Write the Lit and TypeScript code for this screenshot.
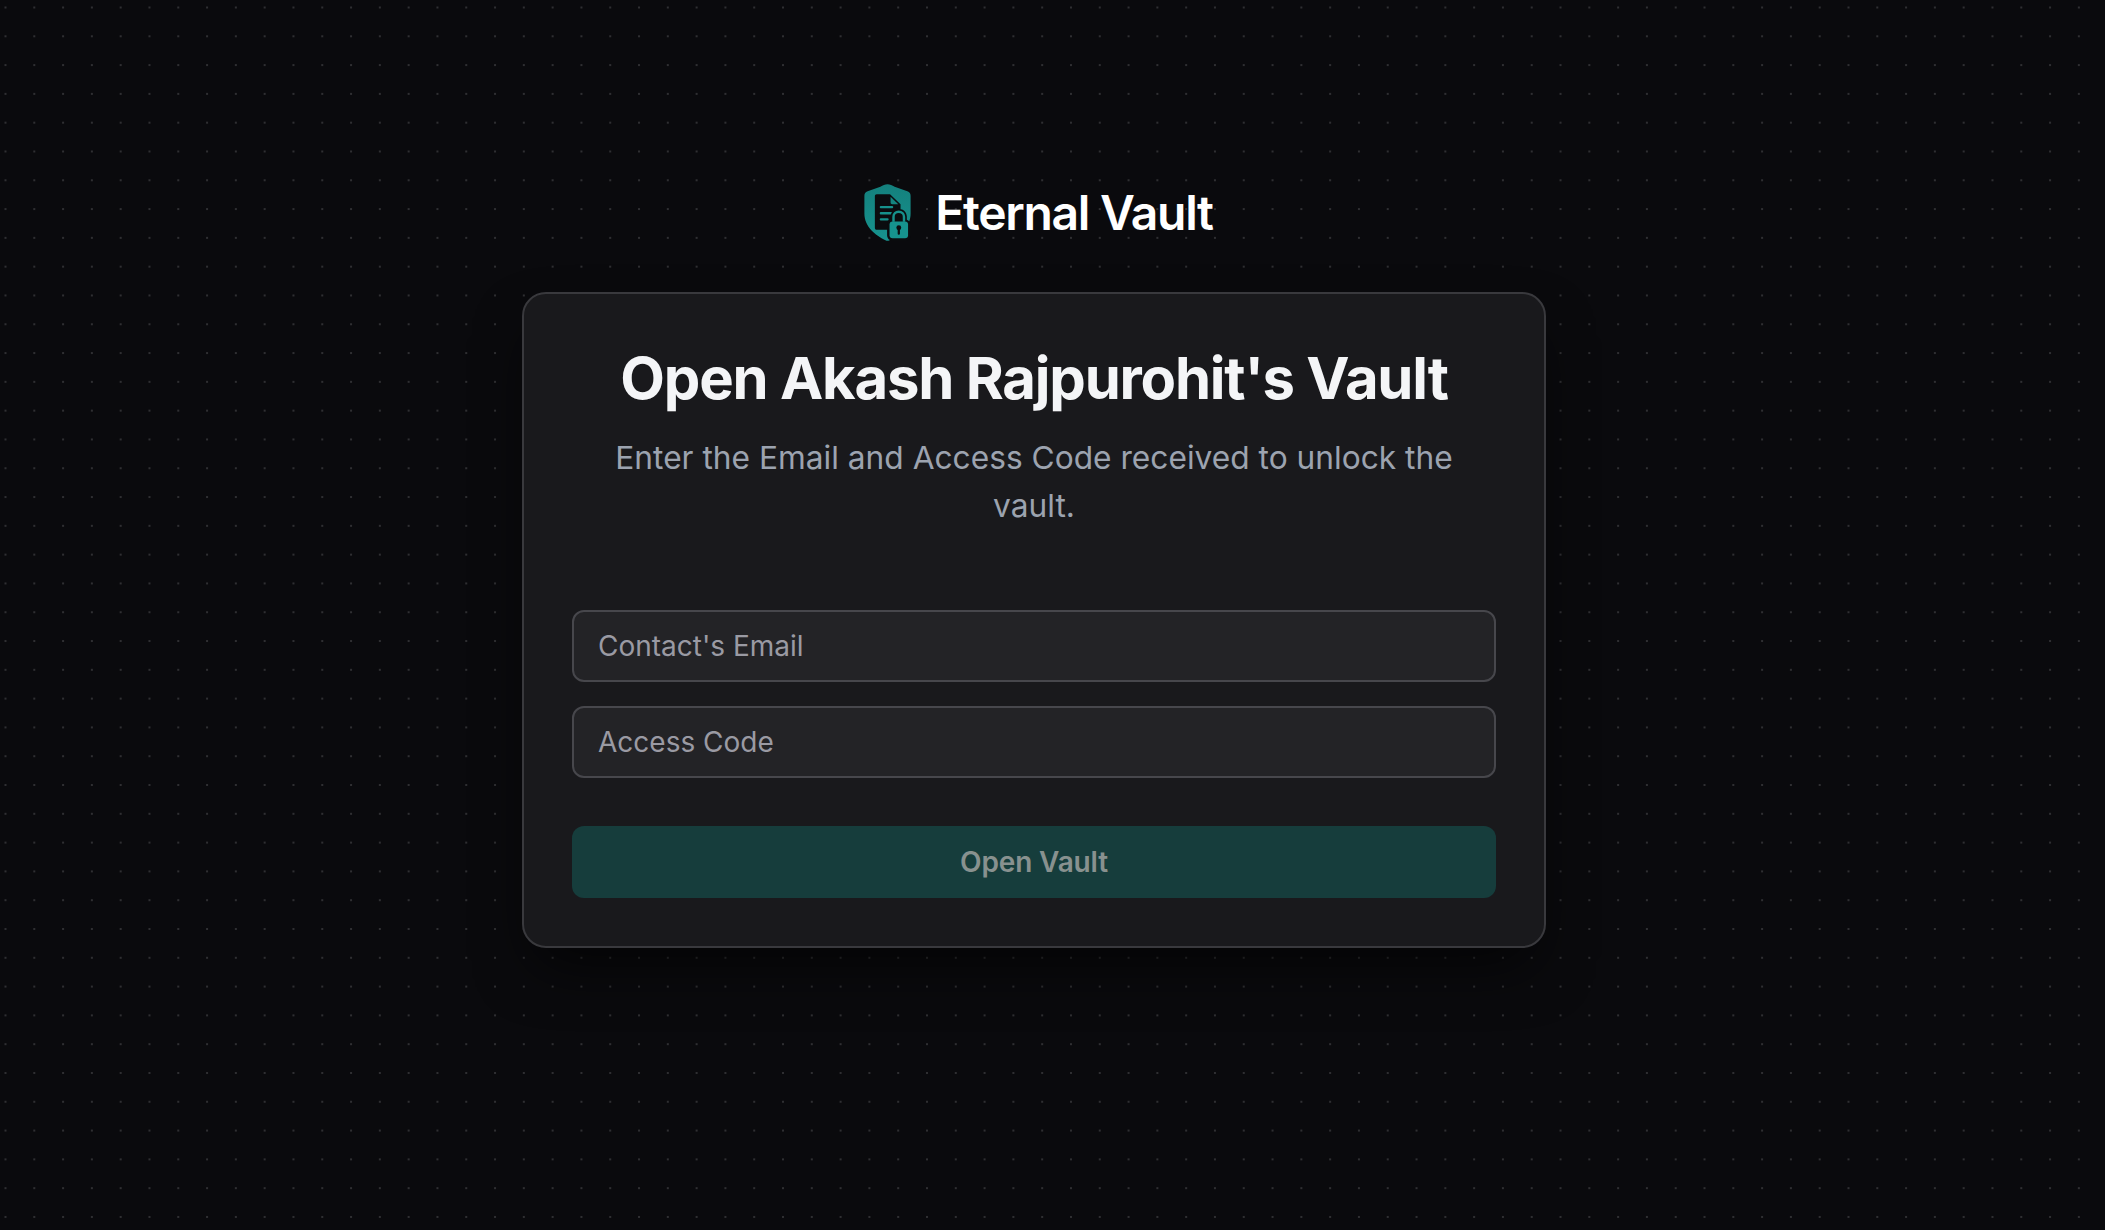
import { LitElement, html, css, svg } from "lit";
import { customElement } from "lit/decorators.js";

const logo = svg`<svg class="logo" viewBox="0 0 46 56" width="47" height="57" aria-hidden="true">
  <defs><linearGradient id="g" x1="0" y1="0" x2="0" y2="1"><stop offset="0" stop-color="#14807d"/><stop offset="1" stop-color="#17938e"/></linearGradient></defs>
  <path d="M23 0.3 C25.5 0.3 27.5 1.6 30 2.6 L42.5 7.2 C44.8 8 45.7 9.4 45.7 11.8 L45.7 29 C45.7 42 35 50.5 25 55.2 C23.6 55.9 22.4 55.9 21 55.2 C11 50.5 0.3 42 0.3 29 L0.3 11.8 C0.3 9.4 1.2 8 3.5 7.2 L16 2.6 C18.5 1.6 20.5 0.3 23 0.3 Z" fill="url(#g)"/>
  <path d="M12.5 10 H25.5 L35.8 20 V33 H29 L24 45 H12.5 C11.2 45 10.6 44.2 10.6 43 V12 C10.6 10.8 11.2 10 12.5 10 Z" fill="#0b0c0f"/>
  <path d="M26 12.5 L33.6 19.8 H27.6 C26.6 19.8 26 19.2 26 18.2 Z" fill="#15847f"/>
  <path d="M16.5 22.7 H27.5 M16.5 28.7 H26.5 M16.5 34.7 H23" stroke="#16918c" stroke-width="2.3" stroke-linecap="round" fill="none"/>
  <path d="M34 24.5 C29 24.5 26 28 26 32 V35 C24 35.8 22.6 37.4 22.6 39.8 V50 C22.6 53.4 24.8 55.6 28.2 55.6 H40.5 C43.6 55.6 45.6 53.4 45.6 50 V39.8 C45.6 37.4 44 35.8 42 35 V32 C42 28 39 24.5 34 24.5 Z" fill="#0b0c0f"/>
  <path d="M28.9 37 V32.2 C28.9 29.2 31 27.3 34 27.3 C37 27.3 39.2 29.2 39.2 32.2 V37" stroke="#16918c" stroke-width="2.4" fill="none"/>
  <rect x="25" y="36.8" width="18.2" height="16.6" rx="3" fill="#16938e"/>
  <circle cx="34.1" cy="43" r="2.4" fill="#0b0c0f"/><rect x="33" y="43.8" width="2.2" height="6" rx="1" fill="#0b0c0f"/>
</svg>`;

@customElement("app-root")
export class AppRoot extends LitElement {
  static styles = css`
    :host {
      display: block;
      min-height: 1230px;
      background-color: #0a0a0d;
      background-image: radial-gradient(circle at 1px 1px, #2f2f32 1.1px, transparent 1.4px);
      background-size: 28.8px 28.8px;
      background-position: 4.5px 6.5px;
      font-family: Inter, "Liberation Sans", sans-serif;
      color: #f4f4f5;
    }
    .page {
      box-sizing: border-box;
      width: 2068px;
      min-height: 1230px;
      padding-top: 183px;
      display: flex;
      flex-direction: column;
      align-items: center;
    }
    .brand {
      display: flex;
      align-items: center;
      gap: 24px;
      height: 58px;
      margin-bottom: 51px;
      margin-left: 9px;
    }
    .logo { display: block; flex: none; }
    .brand-name {
      font-family: Inter, sans-serif;
      font-size: 48px;
      font-weight: 600;
      line-height: 58px;
      padding-top: 2px;
      letter-spacing: -1.3px;
      color: #fff;
    }
    .card {
      box-sizing: border-box;
      width: 1024px;
      height: 656px;
      padding: 48px;
      background: #19191c;
      border: 2px solid #39393d;
      border-radius: 24px;
      box-shadow: 0 28px 58px -14px rgba(0, 0, 0, 0.7);
      display: flex;
      flex-direction: column;
    }
    h1 {
      margin: 0;
      font-size: 58px;
      line-height: 72px;
      font-weight: 700;
      text-align: center;
      letter-spacing: -1.2px;
      color: #f4f5f7;
    }
    .sub {
      margin: 20px 0 0;
      font-size: 31.7px;
      line-height: 48px;
      text-align: center;
      color: #9ca3af;
    }
    .form { display: flex; flex-direction: column; margin-top: 80px; }
    .field {
      box-sizing: border-box;
      height: 72px;
      padding: 0 24px;
      display: flex;
      align-items: center;
      background: #232326;
      border: 2px solid #47474c;
      border-radius: 12px;
      font-size: 28px;
      color: #9a9aa3;
    }
    .field + .field { margin-top: 24px; }
    .btn {
      height: 72px;
      margin-top: 48px;
      display: flex;
      align-items: center;
      justify-content: center;
      background: #163d3c;
      border-radius: 12px;
      font-size: 28px;
      font-weight: 600;
      letter-spacing: -0.15px;
      color: #88918f;
    }
  `;

  render() {
    return html`<div class="page">
      <div class="brand">${logo}<span class="brand-name">Eternal Vault</span></div>
      <div class="card">
        <h1>Open Akash Rajpurohit's Vault</h1>
        <p class="sub">Enter the Email and Access Code received to unlock the vault.</p>
        <div class="form">
          <div class="field">Contact's Email</div>
          <div class="field">Access Code</div>
          <div class="btn">Open Vault</div>
        </div>
      </div>
    </div>`;
  }
}
